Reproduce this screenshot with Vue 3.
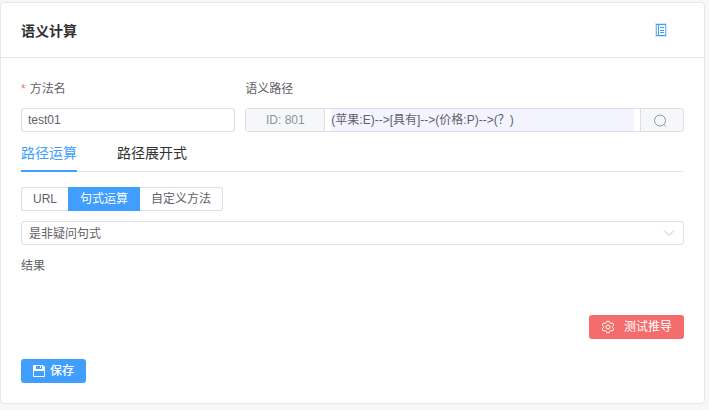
<script setup>
import { ref } from 'vue'

const name = ref('test01')
const path = ref('(苹果:E)-->[具有]-->(价格:P)-->(？)')
const tabs = ['路径运算', '路径展开式']
const activeTab = ref('路径运算')
const modes = ['URL', '句式运算', '自定义方法']
const mode = ref('句式运算')
const sentence = ref('是非疑问句式')
</script>

<template>
  <main class="page">
    <section class="card">
      <header class="card-header">
        <h1>语义计算</h1>
        <button type="button" class="doc-button" aria-label="文档">
          <svg viewBox="0 0 12 14" width="12" height="14" fill="none" stroke="currentColor">
            <rect x="1" y="1" width="10" height="12" stroke-width="2" stroke-opacity=".25" />
            <path d="M1.500 1.500h9v11h-9z" stroke-opacity=".6" />
            <path d="M1 1.500h10M1 12.500h10M3.500 1.500v11" />
            <path d="M5 4.500h4M5 7.500h4M5 9.500h4" />
          </svg>
        </button>
      </header>

      <form class="card-body" @submit.prevent>
        <div class="fields">
          <div class="field">
            <label for="name"><span class="required">*</span>方法名</label>
            <input id="name" v-model="name" class="control" type="text" />
          </div>
          <div class="field">
            <label for="path">语义路径</label>
            <div class="group control">
              <span class="prepend">ID: 801</span>
              <div class="group-main">
                <input id="path" v-model="path" type="text" />
              </div>
              <button type="button" class="append" aria-label="搜索">
                <svg viewBox="0 0 14 14" width="14" height="14" fill="none" stroke="currentColor">
                  <circle cx="7" cy="7.500" r="5.500" />
                  <path d="M11 11.500l2 2" />
                </svg>
              </button>
            </div>
          </div>
        </div>

        <nav class="tabs" role="tablist">
          <button
            v-for="tab in tabs"
            :key="tab"
            type="button"
            role="tab"
            :aria-selected="tab === activeTab"
            :class="['tab', { active: tab === activeTab }]"
            @click="activeTab = tab"
          >{{ tab }}</button>
        </nav>

        <div class="modes" role="radiogroup" aria-label="运算方式">
          <label v-for="item in modes" :key="item" :class="['mode', { active: item === mode }]">
            <input v-model="mode" type="radio" name="mode" :value="item" />
            <span>{{ item }}</span>
          </label>
        </div>

        <div class="select-box">
          <select v-model="sentence" class="control" aria-label="句式">
            <option>是非疑问句式</option>
          </select>
          <svg class="arrow" viewBox="0 0 12 12" width="12" height="12" fill="none" stroke="currentColor">
            <path d="M1 3.500l5 5 5-5" />
          </svg>
        </div>

        <p class="result">结果</p>

        <div class="run-row">
          <button type="button" class="button danger">
            <svg viewBox="0 0 14 14" width="14" height="14" fill="none" stroke="currentColor" stroke-linejoin="round">
              <path d="M5.900 1.200h2.200l.6 1.500 1.200.7 1.600-.3 1.200 2-1 1.200v1.400l1 1.200-1.200 2-1.600-.3-1.200.7-.6 1.500H5.900l-.6-1.500-1.200-.7-1.600.3-1.200-2 1-1.200V6.300l-1-1.200 1.200-2 1.600.3 1.200-.7z" />
              <circle cx="7" cy="7" r="2" />
            </svg>
            测试推导
          </button>
        </div>

        <div class="save-row">
          <button type="submit" class="button primary">
            <svg viewBox="0 0 12 12" width="12" height="12">
              <path
                fill="currentColor"
                fill-rule="evenodd"
                d="M1 0h9l2 2v9q0 1-1 1H1q-1 0-1-1V1q0-1 1-1zM3 1v3h6V1H8v2H7V1zM1 6v5h10V6z"
              />
            </svg>
            保存
          </button>
        </div>
      </form>
    </section>
  </main>
</template>

<style>
body {
  background: #f7f7f8;
}
</style>

<style scoped>
.page {
  padding: 2px 4px 6px 0;
  font: 12px/24px "Liberation Sans", "Noto Sans CJK SC", sans-serif;
  color: #606266;
}

.page *,
.page {
  box-sizing: border-box;
}

button,
input,
select {
  margin: 0;
  padding: 0;
  border: 0;
  font: inherit;
  color: inherit;
  background: none;
}

button {
  cursor: pointer;
}

svg {
  display: block;
  flex: none;
}

.card {
  border: 1px solid #e4e7ed;
  border-radius: 4px;
  background: #fff;
}

.card-header {
  display: flex;
  align-items: center;
  justify-content: space-between;
  height: 55px;
  padding: 0 37px 0 20px;
  border-bottom: 1px solid #e4e7ed;
}

h1 {
  margin: 0;
  padding-top: 1px;
  font-size: 14px;
  font-weight: 600;
  color: #303133;
}

.doc-button {
  color: #409eff;
}

.card-body {
  padding: 19px 20px 20px;
}

.fields {
  display: grid;
  grid-template-columns: 1fr 2fr;
  margin: 0 -5px;
}

.field {
  display: flex;
  flex-direction: column;
  gap: 7px;
  min-width: 0;
  padding: 0 5px;
}

.required {
  margin-right: 4px;
  color: #f56c6c;
}

.control {
  width: 100%;
  height: 24px;
  border: 1px solid #dcdfe6;
  border-radius: 3px;
  background: #fff;
}

input.control,
select.control {
  display: block;
  padding: 0 6px;
}

.group {
  display: flex;
  overflow: hidden;
}

.prepend,
.append {
  display: flex;
  align-items: center;
  justify-content: center;
  flex: none;
  background: #f5f7fa;
  color: #909399;
}

.prepend {
  width: 79px;
  border-right: 1px solid #dcdfe6;
}

.append {
  width: 43px;
  padding-right: 4px;
  border-left: 1px solid #dcdfe6;
}

.group-main {
  display: flex;
  flex: 1;
  min-width: 0;
  padding: 0 6px;
}

.group-main input {
  width: 100%;
  background: #f4f4ff;
}

.tabs {
  display: flex;
  gap: 40px;
  height: 40px;
  box-shadow: inset 0 -1px #e4e7ed;
}

.tab {
  height: 40px;
  padding-top: 4px;
  border-bottom: 2px solid transparent;
  font-size: 14px;
  color: #303133;
}

.tab.active {
  border-color: #409eff;
  color: #409eff;
}

.modes {
  display: flex;
  width: fit-content;
  height: 24px;
  margin: 15px 0 10px;
}

.mode {
  display: flex;
  align-items: center;
  padding: 0 11px;
  border: 1px solid #dcdfe6;
  border-width: 1px 0;
  cursor: pointer;
}

.mode:first-child {
  border-left-width: 1px;
  border-radius: 3px 0 0 3px;
}

.mode:last-child {
  border-right-width: 1px;
  border-radius: 0 3px 3px 0;
}

.mode.active {
  padding: 0 12px;
  border-color: #409eff;
  background: #409eff;
  color: #fff;
}

.mode input {
  position: absolute;
  opacity: 0;
  pointer-events: none;
}

.select-box {
  position: relative;
}

.select-box select {
  padding: 0 7px;
  appearance: none;
}

.arrow {
  position: absolute;
  top: 6px;
  right: 9px;
  color: #c0c4cc;
  pointer-events: none;
}

.result {
  margin: 9px 0 37px;
}

.run-row {
  display: flex;
  justify-content: flex-end;
  margin-bottom: 20px;
}

.button {
  display: flex;
  align-items: center;
  height: 24px;
  padding: 0 12px;
  border-radius: 3px;
  color: #fff;
}

.danger {
  gap: 9px;
  background: #f56c6c;
}

.primary {
  gap: 5px;
  background: #409eff;
  font-weight: 500;
}
</style>
